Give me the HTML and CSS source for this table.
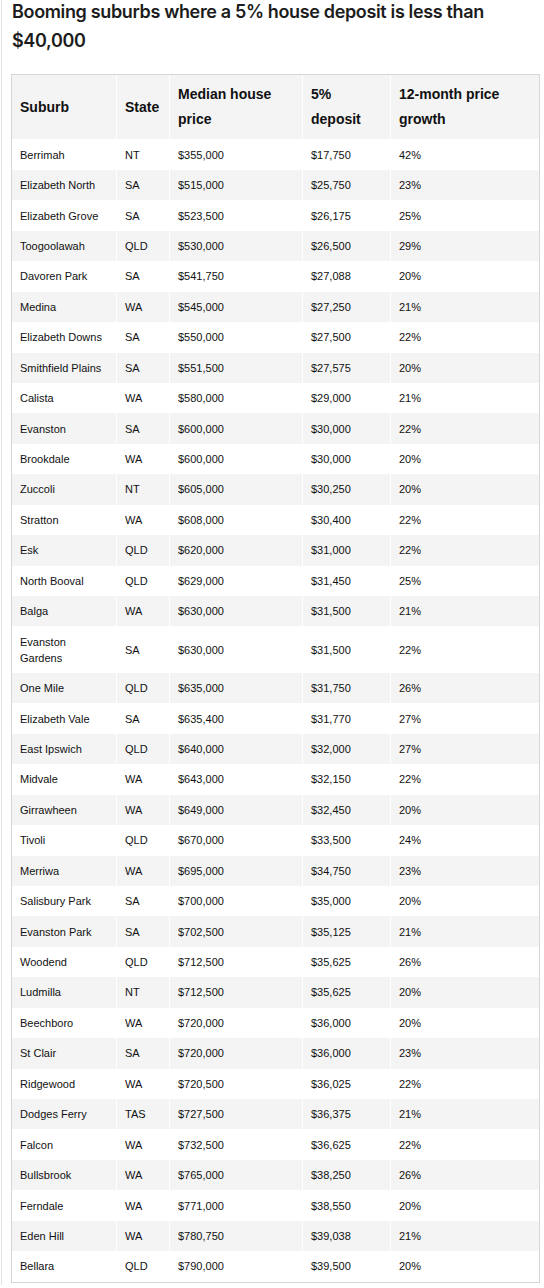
FILE: index.html
```html
<!DOCTYPE html>
<html lang="en">
<head>
  <meta charset="UTF-8" />
  <meta name="viewport" content="width=device-width, initial-scale=1.0" />
  <title>Booming suburbs</title>
  <link rel="stylesheet" href="styles.css">
</head>
<body>
  <div class="page">
    <h2 class="title">Booming suburbs where a 5% house deposit is less than $40,000</h2>

    <table class="data">
      <thead>
        <tr>
          <th class="c-suburb">Suburb</th>
          <th class="c-state">State</th>
          <th class="c-price">Median house price</th>
          <th class="c-deposit">5% deposit</th>
          <th class="c-growth">12-month price growth</th>
        </tr>
      </thead>
      <tbody>
        <tr><td>Berrimah</td><td>NT</td><td>$355,000</td><td>$17,750</td><td>42%</td></tr>
        <tr><td>Elizabeth North</td><td>SA</td><td>$515,000</td><td>$25,750</td><td>23%</td></tr>
        <tr><td>Elizabeth Grove</td><td>SA</td><td>$523,500</td><td>$26,175</td><td>25%</td></tr>
        <tr><td>Toogoolawah</td><td>QLD</td><td>$530,000</td><td>$26,500</td><td>29%</td></tr>
        <tr><td>Davoren Park</td><td>SA</td><td>$541,750</td><td>$27,088</td><td>20%</td></tr>
        <tr><td>Medina</td><td>WA</td><td>$545,000</td><td>$27,250</td><td>21%</td></tr>
        <tr><td>Elizabeth Downs</td><td>SA</td><td>$550,000</td><td>$27,500</td><td>22%</td></tr>
        <tr><td>Smithfield Plains</td><td>SA</td><td>$551,500</td><td>$27,575</td><td>20%</td></tr>
        <tr><td>Calista</td><td>WA</td><td>$580,000</td><td>$29,000</td><td>21%</td></tr>
        <tr><td>Evanston</td><td>SA</td><td>$600,000</td><td>$30,000</td><td>22%</td></tr>
        <tr><td>Brookdale</td><td>WA</td><td>$600,000</td><td>$30,000</td><td>20%</td></tr>
        <tr><td>Zuccoli</td><td>NT</td><td>$605,000</td><td>$30,250</td><td>20%</td></tr>
        <tr><td>Stratton</td><td>WA</td><td>$608,000</td><td>$30,400</td><td>22%</td></tr>
        <tr><td>Esk</td><td>QLD</td><td>$620,000</td><td>$31,000</td><td>22%</td></tr>
        <tr><td>North Booval</td><td>QLD</td><td>$629,000</td><td>$31,450</td><td>25%</td></tr>
        <tr><td>Balga</td><td>WA</td><td>$630,000</td><td>$31,500</td><td>21%</td></tr>
        <tr><td>Evanston Gardens</td><td>SA</td><td>$630,000</td><td>$31,500</td><td>22%</td></tr>
        <tr><td>One Mile</td><td>QLD</td><td>$635,000</td><td>$31,750</td><td>26%</td></tr>
        <tr><td>Elizabeth Vale</td><td>SA</td><td>$635,400</td><td>$31,770</td><td>27%</td></tr>
        <tr><td>East Ipswich</td><td>QLD</td><td>$640,000</td><td>$32,000</td><td>27%</td></tr>
        <tr><td>Midvale</td><td>WA</td><td>$643,000</td><td>$32,150</td><td>22%</td></tr>
        <tr><td>Girrawheen</td><td>WA</td><td>$649,000</td><td>$32,450</td><td>20%</td></tr>
        <tr><td>Tivoli</td><td>QLD</td><td>$670,000</td><td>$33,500</td><td>24%</td></tr>
        <tr><td>Merriwa</td><td>WA</td><td>$695,000</td><td>$34,750</td><td>23%</td></tr>
        <tr><td>Salisbury Park</td><td>SA</td><td>$700,000</td><td>$35,000</td><td>20%</td></tr>
        <tr><td>Evanston Park</td><td>SA</td><td>$702,500</td><td>$35,125</td><td>21%</td></tr>
        <tr><td>Woodend</td><td>QLD</td><td>$712,500</td><td>$35,625</td><td>26%</td></tr>
        <tr><td>Ludmilla</td><td>NT</td><td>$712,500</td><td>$35,625</td><td>20%</td></tr>
        <tr><td>Beechboro</td><td>WA</td><td>$720,000</td><td>$36,000</td><td>20%</td></tr>
        <tr><td>St Clair</td><td>SA</td><td>$720,000</td><td>$36,000</td><td>23%</td></tr>
        <tr><td>Ridgewood</td><td>WA</td><td>$720,500</td><td>$36,025</td><td>22%</td></tr>
        <tr><td>Dodges Ferry</td><td>TAS</td><td>$727,500</td><td>$36,375</td><td>21%</td></tr>
        <tr><td>Falcon</td><td>WA</td><td>$732,500</td><td>$36,625</td><td>22%</td></tr>
        <tr><td>Bullsbrook</td><td>WA</td><td>$765,000</td><td>$38,250</td><td>26%</td></tr>
        <tr><td>Ferndale</td><td>WA</td><td>$771,000</td><td>$38,550</td><td>20%</td></tr>
        <tr><td>Eden Hill</td><td>WA</td><td>$780,750</td><td>$39,038</td><td>21%</td></tr>
        <tr><td>Bellara</td><td>QLD</td><td>$790,000</td><td>$39,500</td><td>20%</td></tr>
      </tbody>
    </table>
  </div>
</body>
</html>
```

FILE: styles.css
```css
* { margin: 0; padding: 0; box-sizing: border-box; }
body {
  background: #fff;
  color: #111;
  font-family: "Liberation Sans", Arial, sans-serif;
}
.page {
  margin-left: 1px;
  border-left: 1px solid #e2e2e2;
  padding-left: 9px;
  min-height: 1288px;
}
.title {
  font-family: Inter, "Noto Sans", sans-serif;
  font-size: 18px;
  font-weight: 600;
  letter-spacing: -0.35px;
  line-height: 29px;
  color: #1c1c1c;
  margin-top: -3px;
  padding-left: 1px;
  margin-bottom: 19px;
}
.data {
  width: 529px;
  table-layout: fixed;
  border-collapse: separate;
  border-spacing: 0;
  border: 1px solid #d6d6d6;
}
.data th,
.data td {
  text-align: left;
  vertical-align: middle;
  padding: 7.22px 8px;
  border-right: 1px solid #fff;
}
.data th:last-child,
.data td:last-child { border-right: none; }
.data th {
  font-size: 14px;
  font-weight: bold;
  line-height: 25px;
  background: #f4f4f4;
}
.data td {
  font-size: 11px;
  line-height: 16px;
}
.data tbody tr:nth-child(even) td { background: #f4f4f4; }
.c-suburb { width: 105px; }
.c-state { width: 53px; }
.c-price { width: 133px; }
.c-deposit { width: 88px; }
.c-growth { width: 148px; }
```
